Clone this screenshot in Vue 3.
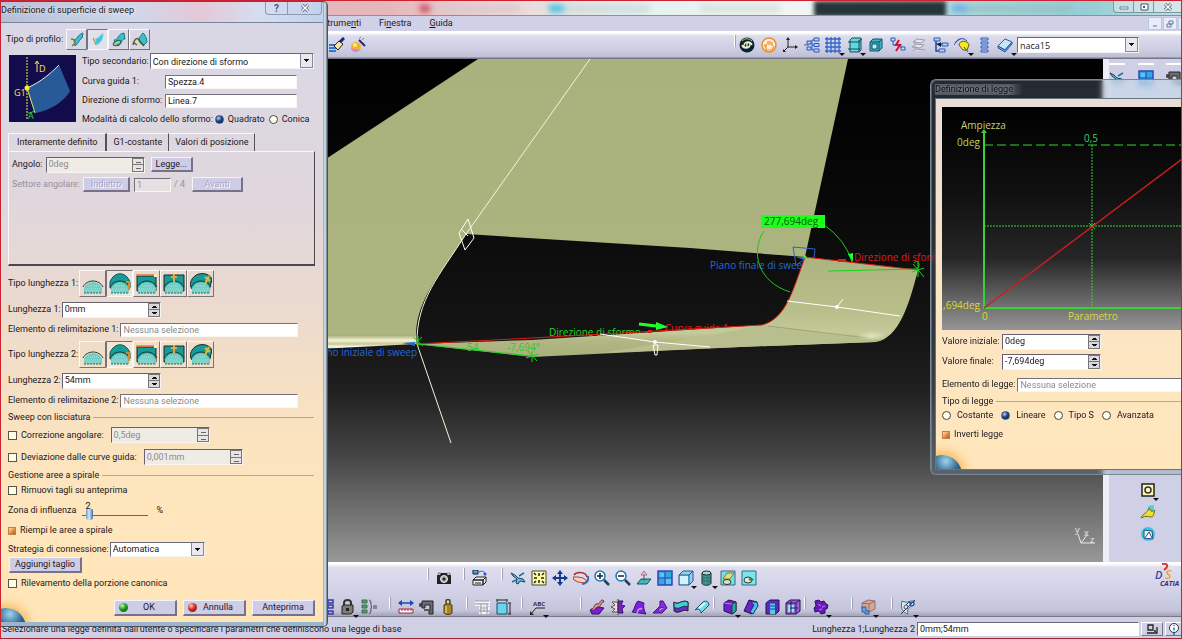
<script setup>
import { ref } from 'vue'

const menus = [
  { pre: 'Strume', key: 'n', post: 'ti' },
  { pre: 'Fi', key: 'n', post: 'estra' },
  { pre: '', key: 'G', post: 'uida' }
]
const topTools = [
  { icon: 'swirl' }, { icon: 'hand' }, { icon: 'axis' }, { icon: 'tree' },
  { icon: 'grid', more: true }, { icon: 'frame', more: true }, { icon: 'cube' },
  { icon: 'link' }, { icon: 'chain' }, { icon: 'branch' }, { icon: 'wheel', more: true },
  { icon: 'stack' }, { icon: 'eraser', more: true }
]
const viewGroups = [
  [{ icon: 'camera' }],
  [{ icon: 'printer' }],
  [{ icon: 'plane' }, { icon: 'fit' }, { icon: 'move' }, { icon: 'rotate' }, { icon: 'zoomin' },
    { icon: 'zoomout' }, { icon: 'normal' }, { icon: 'views' }, { icon: 'iso', more: true },
    { icon: 'shading', more: true }, { icon: 'hide' }, { icon: 'swap' }]
]
const shapeGroups = [
  [{ icon: 'list' }, { icon: 'lock', more: true }, { icon: 'formula' }],
  [{ icon: 'ruler' }, { icon: 'caliper' }, { icon: 'weight' }],
  [{ icon: 'dimgray' }, { icon: 'dimcyan' }],
  [{ icon: 'note', more: true }],
  [{ icon: 'extrude' }, { icon: 'revolve' }, { icon: 'offset' }, { icon: 'sweep' }, { icon: 'loft' }, { icon: 'blend' }],
  [{ icon: 'join', more: true }, { icon: 'split' }, { icon: 'trim' }, { icon: 'extract' }],
  [{ icon: 'gears', more: true }],
  [{ icon: 'pattern', more: true }],
  [{ icon: 'analyse', more: true }]
]
const profiles = ['prof1', 'prof2', 'prof3', 'prof4']
const tabs = ['Interamente definito', 'G1-costante', 'Valori di posizione']
const lengthTypes = ['len1', 'len2', 'len3', 'len4', 'len5']
const lengths = ref([
  { n: 1, value: '0mm', type: 1 },
  { n: 2, value: '54mm', type: 1 }
])
const profile = ref(1)
const tab = ref(0)
const mode = ref('Quadrato')
const law = ref('Lineare')
const laws = ['Costante', 'Lineare', 'Tipo S', 'Avanzata']
const influence = ref(2)
</script>

<template>
  <div class="desktop">
    <svg class="defs" aria-hidden="true">
      <defs>
        <g id="dome"><path d="M2 20v-5c4-8 14-8 18 0v5z" fill="#74cdc4"/><path d="M3 16h16M4 18h14M6 13h10" stroke="#a8e4dc" stroke-dasharray="1 1"/><path d="M2 20h18" stroke="#2d6c68" stroke-dasharray="2 1"/><path d="M1 14c4-8 16-8 20 0" fill="none" stroke="#223838"/></g>
      </defs>
      <symbol id="brush" viewBox="0 0 16 16"><path d="M0 8h8M0 11h9M0 14h7" stroke="#2f78d8" stroke-width="2"/><path d="M5 9l5-5 4 3-5 6z" fill="#f2e9a0" stroke="#222"/><path d="M11 5l4-4" stroke="#1c1c8c" stroke-width="3"/></symbol>
      <symbol id="wand" viewBox="0 0 16 16"><circle cx="6" cy="10" r="5" fill="#f2b52a"/><path d="M1 11a5 5 0 0 0 9 2" fill="#d28bc0"/><circle cx="5" cy="8" r="2" fill="#ffe98a"/><path d="M9 3l6 6" stroke="#26266e" stroke-width="2"/><path d="M9 2l2-2M12 3l2-2" stroke="#d86a3a"/></symbol>
      <symbol id="swirl" viewBox="0 0 16 16"><circle cx="8" cy="8" r="7.500" fill="#0c1f38"/><path d="M8 8c-1-3 4-3 3 0-1 4-7 4-8 0M8 8c1 3-4 3-3 0 1-4 7-4 8 0" fill="none" stroke="#e8f2c8" stroke-width="1.400"/><path d="M3 4c3-3 7-3 10 0" fill="none" stroke="#b9d66a"/></symbol>
      <symbol id="hand" viewBox="0 0 16 16"><circle cx="8" cy="8" r="7" fill="#fbeedd" stroke="#ef8d22" stroke-width="1.500"/><path d="M5 13V7M7 8V4M9 8V4M11 9V5M5 13h6l2-4M5 10L3 8" fill="none" stroke="#ef8d22" stroke-width="1.200"/></symbol>
      <symbol id="axis" viewBox="0 0 16 16"><path d="M6 10V1M6 10h9M6 10l-5 5" stroke="#222" fill="none"/><path d="M4 3l2-3 2 3zM13 8l3 2-3 2zM1 12v3h3z" fill="#222"/></symbol>
      <symbol id="tree" viewBox="0 0 16 16"><path d="M0 8h5M8 3v10M8 3h2M8 8h2M8 13h2" stroke="#2d58b8"/><path d="M3 4h4v3H3zM3 10h4v3H3zM10 1h5v3h-5zM10 6.500h5v3h-5zM10 12h5v3h-5z" fill="#b9d3f5" stroke="#2d58b8"/></symbol>
      <symbol id="grid" viewBox="0 0 16 16"><path d="M2 0v16M6 0v16M10 0v16M14 0v16M0 2h16M0 6h16M0 10h16M0 14h16" stroke="#3464c8" stroke-width="1.300"/></symbol>
      <symbol id="frame" viewBox="0 0 16 16"><path d="M3 3l2-2h9v12l-2 2H3z" fill="#63d8dc" stroke="#174a58"/><path d="M1 5h12M1 12h12M12 3v12M12 4l3-2" stroke="#174a58" fill="none"/></symbol>
      <symbol id="cube" viewBox="0 0 16 16"><path d="M2 5l3-3h9v9l-3 3H2z" fill="#35b9c4" stroke="#15506c"/><path d="M2 5h9v9M11 5l3-3" fill="none" stroke="#15506c"/><path d="M4 7h5v5H4z" fill="#b6f0ee" stroke="#15506c"/></symbol>
      <symbol id="link" viewBox="0 0 16 16"><path d="M1 1h4v3H1zM11 10h4v3h-4z" fill="#cfe0fb" stroke="#2d58b8"/><path d="M3 4v4h8v3" stroke="#2d58b8" fill="none"/><path d="M9 3L6 8h4l-4 6" stroke="#cc1235" stroke-width="2" fill="none"/></symbol>
      <symbol id="chain" viewBox="0 0 16 16"><path d="M2 5l4-3 8 1-4 3zM1 10l4-3 8 1-4 3zM2 14l3-2 9 1" fill="#e4e4ec" stroke="#9c9ca8"/><path d="M4 3v10" stroke="#a8a8b0"/></symbol>
      <symbol id="branch" viewBox="0 0 16 16"><path d="M3 1v13h5M3 7h7" stroke="#1e4a9c" fill="none" stroke-width="1.500"/><path d="M1 1h6v3H1zM9 6h6v3H9zM6 12h6v3H6z" fill="#b9d3f5" stroke="#2d58b8"/><path d="M8 5L4 7.500 8 10z" fill="#123"/></symbol>
      <symbol id="wheel" viewBox="0 0 16 16"><path d="M1 6c4-6 9-5 12-2" stroke="#244a9c" fill="none"/><path d="M0 8c3-4 4-5 7-6" stroke="#244a9c" fill="none" stroke-dasharray="2 1"/><path d="M5 8c0-5 9-5 10 0l-2 5H9z" fill="#f7e71e" stroke="#665a10"/><path d="M10 10l4 5" stroke="#244a9c"/></symbol>
      <symbol id="stack" viewBox="0 0 16 16"><path d="M5 1h7v2H5zM5 5h7v2H5zM5 9h7v2H5zM5 13h7v2H5z" fill="#c6dcfb" stroke="#2858c0"/></symbol>
      <symbol id="eraser" viewBox="0 0 16 16"><path d="M1 9l7-7 7 3-7 8z" fill="#c8e6fa" stroke="#2e58a0"/><path d="M1 9v2l7 4 7-8V5l-7 8z" fill="#6fa8dc" stroke="#2e58a0"/></symbol>
      <symbol id="camera" viewBox="0 0 16 16"><path d="M1 5h3l1-2h6l1 2h3v9H1z" fill="#222"/><path d="M2 3h3v1H2zM11 3h3v2h-3z" fill="#eee" stroke="#333" stroke-width=".5"/><circle cx="8" cy="9" r="3.500" fill="#aaa" stroke="#eee"/><circle cx="8" cy="9" r="1.500" fill="#222"/></symbol>
      <symbol id="printer" viewBox="0 0 16 16"><path d="M1 0h5v4H1z" fill="#3ab5c8" stroke="#214"/><path d="M7 2c4-2 6 0 6 3" stroke="#2355c8" fill="none"/><circle cx="13" cy="4" r="1.500" fill="#2355c8"/><path d="M1 10l3-3h10l-3 3zM1 10h10v5H1zM11 10l3-3v5l-3 3z" fill="#eee" stroke="#222"/><path d="M3 13h6" stroke="#222"/></symbol>
      <symbol id="plane" viewBox="0 0 16 16"><path d="M1 3l4 2 3 3 5 1 2 3-5-1-2 3-2-1 1-4-4-3z" fill="#5cc8d4" stroke="#1b3d68"/><path d="M2 12l4-2M9 6l5-3" stroke="#2b6d98" stroke-width="1.500"/></symbol>
      <symbol id="fit" viewBox="0 0 16 16"><path d="M1 1h14v14H1z" fill="#fffca0" stroke="#444"/><path d="M8 3v3M8 10v3M3 8h3M10 8h3M3 3l2 2M13 3l-2 2M3 13l2-2M13 13l-2-2" stroke="#222" stroke-width="1.500"/></symbol>
      <symbol id="move" viewBox="0 0 16 16"><path d="M8 1v14M1 8h14" stroke="#183a90" stroke-width="2"/><path d="M5 4l3-4 3 4zM5 12l3 4 3-4zM4 5L0 8l4 3zM12 5l4 3-4 3z" fill="#183a90"/></symbol>
      <symbol id="rotate" viewBox="0 0 16 16"><path d="M1 5c3-4 12-3 13 2" fill="none" stroke="#a82626" stroke-width="1.500"/><path d="M0 7h5l5 1 4 3-3 2-6-1-4-2z" fill="#f6d2c0" stroke="#a84632"/><path d="M15 6c1 5-2 8-6 8" fill="none" stroke="#2d69b8" stroke-width="2"/></symbol>
      <symbol id="zoomin" viewBox="0 0 16 16"><circle cx="6" cy="6" r="5" fill="#fff" stroke="#147bb4" stroke-width="1.500"/><path d="M3 6h6M6 3v6" stroke="#222" stroke-width="1.500"/><path d="M10 10l5 5" stroke="#253f5a" stroke-width="2.500"/></symbol>
      <symbol id="zoomout" viewBox="0 0 16 16"><circle cx="6" cy="6" r="5" fill="#fff" stroke="#147bb4" stroke-width="1.500"/><path d="M3 6h6" stroke="#222" stroke-width="1.500"/><path d="M10 10l5 5" stroke="#253f5a" stroke-width="2.500"/></symbol>
      <symbol id="normal" viewBox="0 0 16 16"><path d="M1 14l4-5h10l-4 5z" fill="#46b9b8" stroke="#15506c"/><path d="M8 11V5" stroke="#555"/><path d="M5 5l3-4 3 4z" fill="#e7c5d4" stroke="#84506c" stroke-width=".7"/></symbol>
      <symbol id="views" viewBox="0 0 16 16"><path d="M1 1h14v14H1z" fill="#31a8e0" stroke="#3048b8" stroke-width="1.500"/><path d="M8 1v14M1 8h14" stroke="#3048b8"/><path d="M3 3h4v4H3zM9 9h5v5H9z" fill="#5cc4f0"/></symbol>
      <symbol id="iso" viewBox="0 0 16 16"><path d="M1 5l4-4h10v10l-4 4H1z" fill="#8ed5f4" stroke="#28508c"/><path d="M1 5h10v10M11 5l4-4" fill="none" stroke="#28508c"/><path d="M2 6h8v8H2z" fill="#d2f2ff"/></symbol>
      <symbol id="shading" viewBox="0 0 16 16"><path d="M3 3v10c0 3 9 3 9 0V3" fill="#4da5a5" stroke="#222"/><ellipse cx="7.500" cy="3" rx="4.500" ry="2" fill="#9ae0d0" stroke="#222"/><path d="M5 5v9M8 5v10M10 5v9M3 8h9M3 11h9" stroke="#20605c" stroke-width=".7"/></symbol>
      <symbol id="hide" viewBox="0 0 16 16"><path d="M1 1h14v14H1z" fill="#7bdce6" stroke="#3c6878"/><path d="M3 9l4-6h7l-4 6z" fill="#e5df65" stroke="#555" stroke-width=".7"/><ellipse cx="7" cy="12" rx="4" ry="2.500" fill="#cceac0" stroke="#333"/></symbol>
      <symbol id="swap" viewBox="0 0 16 16"><path d="M1 1h14v14H1z" fill="#7be6f0" stroke="#2c6a88"/><ellipse cx="7" cy="10" rx="4" ry="3" fill="#e6ecd0" stroke="#333"/><path d="M8 9c2 1 3 1 4 0" stroke="#347a44" stroke-width="2" fill="none"/></symbol>
      <symbol id="list" viewBox="0 0 16 16"><path d="M9 1h5v3H9zM9 6h5v3H9zM9 12h5v3H9zM2 2v11" fill="none" stroke="#3838a8" stroke-width="1.500"/></symbol>
      <symbol id="lock" viewBox="0 0 16 16"><path d="M4 7V4c0-4 7-4 7 0v3" fill="none" stroke="#333" stroke-width="2"/><path d="M2 7l2-1h9v7l-2 2H2z" fill="#807c70" stroke="#222"/><path d="M6 9h3v3H6z" fill="#222"/></symbol>
      <symbol id="formula" viewBox="0 0 16 16"><path d="M1 1h5v3H1zM1 6h5v3H1zM1 11h5v3H1z" fill="#38a09a" stroke="#4b6c38"/><path d="M8 1c3 0 1 6 3 7-2 0 0 6-3 7M12 7h4M12 9h4" fill="none" stroke="#444"/></symbol>
      <symbol id="ruler" viewBox="0 0 16 16"><path d="M1 4h14" stroke="#2345b8" stroke-width="1.500"/><path d="M4 1L0 4l4 3zM12 1l4 3-4 3z" fill="#2345b8"/><path d="M1 10h14v4H1z" fill="#fff" stroke="#9c2632"/><path d="M4 10v2M7 10v2M10 10v2M13 10v2" stroke="#9c2632"/></symbol>
      <symbol id="caliper" viewBox="0 0 16 16"><path d="M3 2h11v13h-4v-3h1V6H6v3H3z" fill="#686c74" stroke="#222"/><path d="M3 5H1v2h2M5 11h5" stroke="#333" stroke-width="1.500" fill="none"/></symbol>
      <symbol id="weight" viewBox="0 0 16 16"><path d="M6 5V2c0-2 4-2 4 0v3" stroke="#554414" stroke-width="1.500" fill="none"/><path d="M4 6l2-1h4l2 1v8c-2 2-6 2-8 0z" fill="#a88423" stroke="#4c3c12"/><path d="M6 7v7" stroke="#e0c878" stroke-width="1.500"/></symbol>
      <symbol id="dimgray" viewBox="0 0 16 16"><path d="M0 3h14v3H0zM4 9h10v2M7 14V6M11 14V6M4 14h10" fill="none" stroke="#f6f6fa" stroke-width="2"/><path d="M0 2h14M0 5h14M5 9h8M5 12h8M6 5v10M12 5v10" stroke="#9c9ca8"/></symbol>
      <symbol id="dimcyan" viewBox="0 0 16 16"><path d="M1 4h10v11H1z" fill="#68d5ea" stroke="#174a78"/><path d="M1 1h10M14 4v11M12 4h3M12 15h3M1 0v3M11 0v3" stroke="#222"/></symbol>
      <symbol id="note" viewBox="0 0 16 16"><path d="M1 15l5-6h9" stroke="#222" fill="none"/><path d="M0 12v4h4z" fill="#222"/><text x="3" y="7" font-family="Open Sans, sans-serif" font-size="6" font-weight="700" fill="#333">ABC</text></symbol>
      <symbol id="extrude" viewBox="0 0 16 16"><path d="M1 11l9-3 5 1-5 6H3z" fill="#7a20cf" stroke="#38106c"/><path d="M2 10c4 0 2-5 6-5s2-4 6-4l1 2c-3 0-2 4-6 5s-3 4-6 3z" fill="#d49a78" stroke="#6c2c6c"/></symbol>
      <symbol id="revolve" viewBox="0 0 16 16"><path d="M7 3H2l3 3-4 2 4 2-3 3h5" fill="#e9e1d0" stroke="#555"/><path d="M8 2h5l-2 4 4 1-3 3 1 4H8z" fill="#7a20cf" stroke="#38106c"/><path d="M8 0v16" stroke="#333" stroke-dasharray="2 1"/></symbol>
      <symbol id="offset" viewBox="0 0 16 16"><path d="M1 13c3-3 3-9 6-11l6 2c-1 3 0 8 2 11z" fill="#7d22dc" stroke="#42127c"/><path d="M6 14c1-4 3-5 5-4" stroke="#c898f0" stroke-width="1.500" fill="none"/></symbol>
      <symbol id="sweep" viewBox="0 0 16 16"><path d="M1 14l7-7V2h3l4 7-5 5z" fill="#8a2be2" stroke="#42127c"/><path d="M6 12c1-3 4-4 6-3" fill="#d8c8ec" stroke="#42127c"/></symbol>
      <symbol id="loft" viewBox="0 0 16 16"><path d="M1 3c4 4 8-3 14 0v9c-5-3-9 4-14 0z" fill="#6b2ac8" stroke="#222"/><path d="M1 3c4 4 8-3 14 0v5c-5-3-9 4-14 0z" fill="#48cbd8" stroke="#234"/></symbol>
      <symbol id="blend" viewBox="0 0 16 16"><path d="M1 11l8-8c3-2 6 0 6 3l-8 8c0-3-3-5-6-3z" fill="#73deee" stroke="#234c6c"/><path d="M5 9l6-5" stroke="#d8fbff" stroke-width="2"/></symbol>
      <symbol id="join" viewBox="0 0 16 16"><path d="M2 4l5-3 7 2v9l-4 3-8-3z" fill="#6b22c8" stroke="#221048"/><path d="M10 5l4-2v9l-4 3z" fill="#2da6b0" stroke="#143"/><path d="M2 4l8 1" stroke="#b882e8"/></symbol>
      <symbol id="split" viewBox="0 0 16 16"><path d="M1 12L6 1l8 2-5 12z" fill="#6b22c8" stroke="#221048"/><path d="M8 3l6 0 1 4-5 8-3-2 4-7z" fill="#52bdf0" stroke="#123a6c"/></symbol>
      <symbol id="trim" viewBox="0 0 16 16"><path d="M2 4l4-3h9v11l-3 3H2z" fill="#6b22c8" stroke="#221048"/><path d="M6 4h5v11H6z" fill="#52cbe8"/><path d="M6 7h5M6 10h5M2 4h10v11" fill="none" stroke="#2440a0"/></symbol>
      <symbol id="extract" viewBox="0 0 16 16"><path d="M1 4l4-3h10v11l-4 3H1z" fill="#9864d4" stroke="#221048"/><path d="M3 6h6v7H3z" fill="#8be8ea"/><path d="M1 4h10v11M11 4l4-3M5 9h8M6 2v12" fill="none" stroke="#2a1860"/></symbol>
      <symbol id="gears" viewBox="0 0 16 16"><path d="M2 2l4-1 2 2 3-1 2 3 2 1-1 4-2 0 0 4-4 1-2-3-4 1-1-4 2-2z" fill="#6718b8" stroke="#301060"/><path d="M5 5l3 2M9 8l3-1M6 11l3-1" stroke="#a860e0" stroke-width="1.500"/></symbol>
      <symbol id="pattern" viewBox="0 0 16 16"><path d="M2 4l6-3 7 1v8l-6 3-7-3z" fill="#d8a890" stroke="#996c70"/><path d="M9 5v8M2 4l7 1 6-3" stroke="#8a6878" fill="none"/><path d="M2 8h4v4h3v3H5v-2H2z" fill="#60a8e4" stroke="#2b5aa8"/></symbol>
      <symbol id="analyse" viewBox="0 0 16 16"><path d="M2 2c6 3 8-1 12 0v4c-4 1-8 5-6 9-5-1-8-6-6-13z" fill="#c4eef4" stroke="#1d7fa8"/><path d="M1 15L15 1M6 6l3-3 3 2" stroke="#333" fill="none"/><circle cx="6" cy="8" r="2" fill="none" stroke="#c22a50"/><circle cx="12" cy="5" r="2" fill="none" stroke="#2430a8"/></symbol>
      <symbol id="sketch" viewBox="0 0 16 16"><path d="M2 2h12v12H2z" fill="#fff6b4" stroke="#222" stroke-width="1.500"/><circle cx="8" cy="8" r="3" fill="none" stroke="#333" stroke-width="1.500"/></symbol>
      <symbol id="surface" viewBox="0 0 16 16"><path d="M8 2l6-1v8l-5 2z" fill="#5acbd8"/><path d="M1 14c2-5 6-4 8-10l2 3c2 1 4-1 4-1-2 5-1 7-4 7s-4-2-10 1z" fill="#e9e22c" stroke="#6c6a1a"/></symbol>
      <symbol id="spot" viewBox="0 0 16 16"><circle cx="8" cy="8" r="7" fill="#35c8e0"/><path d="M4 4l8 1 1 8-9-1z" fill="#e8f2d0" stroke="#214a8c"/><path d="M5 12l4-6 3 6" fill="#fff" stroke="#214a8c"/></symbol>
      <symbol id="prof1" viewBox="0 0 16 16"><path d="M5 8c3 0 3-5 9-7l-1 5c-3 2-3 5-7 8z" fill="#3abfce" stroke="#19788a"/><path d="M2 7c2 0 4 1 4 3s-2 3-3 4" fill="none" stroke="#7d7a30" stroke-width="1.500"/></symbol>
      <symbol id="prof2" viewBox="0 0 16 16"><path d="M5 7c4-1 5-4 8-6 1 6-3 11-7 12z" fill="#45c3dc" stroke="#92dcec"/><path d="M3 6l3 7" stroke="#a88c28"/></symbol>
      <symbol id="prof3" viewBox="0 0 16 16"><path d="M3 8c5 0 3-6 10-7l1 6c-5 0-2 6-8 7z" fill="#3abfce" stroke="#19788a"/><ellipse cx="6" cy="11" rx="4" ry="2" fill="#8fd0cc" stroke="#3e5b30" transform="rotate(-25 6 11)"/></symbol>
      <symbol id="prof4" viewBox="0 0 16 16"><path d="M7 6l4-5c3 2 4 8 4 9l-3 3-4-4z" fill="#3abfce" stroke="#19788a"/><path d="M1 13c2-8 5-8 7-3l4 4M1 10l4 3" fill="none" stroke="#59601c" stroke-width="1.500"/></symbol>
      <symbol id="len1" viewBox="0 0 22 22"><use href="#dome"/></symbol>
      <symbol id="len2" viewBox="0 0 22 22"><path d="M1 15V9c4-11 16-11 20 0v6z" fill="#159c98" stroke="#155"/><use href="#dome"/><path d="M20 8v9M17 9h4" stroke="#d88b24" stroke-width="2"/></symbol>
      <symbol id="len3" viewBox="0 0 22 22"><path d="M1 3h19v15H1z" fill="#159c98" stroke="#222"/><use href="#dome"/><path d="M0 2h19" stroke="#e87a3a" stroke-width="1.500"/><path d="M18 1h3v3h-3z" fill="#fff0b0"/></symbol>
      <symbol id="len4" viewBox="0 0 22 22"><path d="M1 2h20v16H1z" fill="#159c98" stroke="#222"/><use href="#dome"/><path d="M11 1v8M8 4h6" stroke="#e8a83a" stroke-width="2"/></symbol>
      <symbol id="len5" viewBox="0 0 22 22"><path d="M0 12c2-14 18-14 22-6l-3 12-17-2z" fill="#159c98" stroke="#222"/><use href="#dome"/><path d="M19 3l-4 8M15 4l5 4" stroke="#e8b83a" stroke-width="2"/></symbol>
    </svg>

    <main class="app">
      <header class="titlebar">
        <i class="ghost g1"></i><i class="ghost g2"></i><i class="ghost g3"></i><i class="ghost g4"></i><i class="ghost g5"></i>
        <div class="winbtns">
          <button aria-label="Riduci"><svg viewBox="0 0 10 8"><path d="M1 4h8v2H1z" fill="#fff" stroke="#456" stroke-width=".7"/></svg></button>
          <button aria-label="Ripristina"><svg viewBox="0 0 10 8"><path d="M2 1h7v6H2z" fill="#fff" stroke="#456"/><path d="M4 3h2v2H4z" fill="#456"/></svg></button>
          <button aria-label="Chiudi" class="last"><svg viewBox="0 0 10 8"><path d="M2 1l6 6M8 1L2 7" stroke="#456" stroke-width="3"/><path d="M2 1l6 6M8 1L2 7" stroke="#fff" stroke-width="1.500"/></svg></button>
        </div>
      </header>

      <nav class="menubar">
        <a v-for="m in menus" :key="m.post" href="#">{{ m.pre }}<u>{{ m.key }}</u>{{ m.post }}</a>
        <span class="docbtns">
          <button aria-label="Riduci documento"><svg viewBox="0 0 10 10"><path d="M3 7h4" stroke="#68789a"/></svg></button>
          <button aria-label="Ripristina documento"><svg viewBox="0 0 10 10"><path d="M4 2h4v3H4zM2 5h4v3H2z" fill="none" stroke="#68789a"/></svg></button>
          <button aria-label="Chiudi documento"></button>
        </span>
      </nav>

      <div class="toolbar top">
        <button class="tool" aria-label="Proprietà"><svg><use href="#brush"/></svg></button>
        <button class="tool" aria-label="Effetto"><svg><use href="#wand"/></svg></button>
        <div class="toptools">
          <span class="sep"></span>
          <button v-for="t in topTools" :key="t.icon" class="tool" :class="{ more: t.more }" :aria-label="t.icon"><svg><use :href="'#' + t.icon"/></svg></button>
        </div>
        <span class="combo body-combo"><select aria-label="Corpo attivo"><option>naca15</option></select></span>
      </div>

      <div class="work">
        <svg class="scene" viewBox="0 59 1103 503" preserveAspectRatio="xMinYMin slice">
          <defs>
            <linearGradient id="sky" gradientUnits="userSpaceOnUse" x1="0" y1="59" x2="0" y2="562">
              <stop offset="0" stop-color="#000"/><stop offset=".25" stop-color="#070707"/><stop offset=".55" stop-color="#141414"/>
              <stop offset=".66" stop-color="#202020"/><stop offset=".78" stop-color="#424242"/><stop offset="1" stop-color="#989898"/>
            </linearGradient>
            <linearGradient id="wing" x1="0" y1="0" x2="0" y2="1"><stop offset="0" stop-color="#a9b27c"/><stop offset="1" stop-color="#acb47f"/></linearGradient>
            <linearGradient id="edge" x1="0" y1="0" x2="0" y2="1">
              <stop offset="0" stop-color="#a3a878"/><stop offset=".35" stop-color="#f4f2cc"/><stop offset=".6" stop-color="#c9c89a"/><stop offset=".8" stop-color="#fffef0"/><stop offset="1" stop-color="#77785a"/>
            </linearGradient>
            <linearGradient id="tip" x1="0" y1="0" x2="0" y2="1">
              <stop offset="0" stop-color="#acb37e"/><stop offset=".55" stop-color="#b9bf8b"/><stop offset=".76" stop-color="#c6c99a"/><stop offset=".84" stop-color="#b0b684"/><stop offset="1" stop-color="#a8ae7c"/>
            </linearGradient>
            <radialGradient id="glow"><stop offset="0" stop-color="#e4e6bc"/><stop offset="1" stop-color="#e4e6bc" stop-opacity="0"/></radialGradient>
          </defs>
          <rect y="59" width="2400" height="1400" fill="url(#sky)"/>
          <g class="label">
            <text x="549" y="336" fill="#22d422">Direzione di sformo</text>
            <text x="665" y="332" fill="#f01818">Curva guida 1</text>
            <text x="710" y="269" fill="#2767d8">Piano finale di sweep</text>
            <text x="854" y="261" fill="#e01a1a">Direzione di sformo</text>
            <text x="417" y="356" fill="#2767d8" text-anchor="end">Piano iniziale di sweep</text>
          </g>
          <path d="M300 176L478 59H848L805 257L690 248L466 234C440 275 416 300 416 336H300z" fill="url(#wing)"/>
          <path d="M300 335H416V344L300 350z" fill="url(#edge)"/>
          <path d="M416 344L532 340L762 325C786 319 793 290 805 257L918 270C909 305 899 338 876 342L740 347L532 357z" fill="url(#tip)"/>
          <path d="M762 325C800 329 840 334 876 342L740 347L600 353C660 344 720 334 762 325z" fill="#b9be8e"/>
          <path d="M768 326L868 338" stroke="#8f9568" stroke-opacity=".6"/>
          <ellipse cx="872" cy="336" rx="16" ry="5" fill="url(#glow)"/>
          <g fill="none">
            <path d="M416 344L532 338L762 325C786 319 793 290 805 257L918 270" stroke="#d82010"/>
            <path d="M590 59L466 234C440 275 416 300 417 344L451 443" stroke="#f4f4dc"/>
            <path d="M468 219l6 19-9 12-6-17zM462 230l6 6" stroke="#fff"/>
            <path d="M787 301L837 307L900 316M837 307l6-8M600 334L655 342L710 347" stroke="#fff"/>
            <path d="M653 345h5l-1 10h-2z" stroke="#fff"/>
            <path d="M793 247l22 2-1 9M793 247l3 18 9-6" stroke="#2d62c8"/>
            <path d="M764 231C750 252 758 282 790 292M824 225Q845 239 852 262" stroke="#1fc81f"/>
            <path d="M828 271L918 269M417 344L532 356" stroke="#1fd01f"/>
            <path d="M413 337l10 9M413 345l9-8M418 336v11M527 350l10 11M526 358l12-4M532 351v11M913 264l11 13M912 272l12-4M918 261v16M914 263c3-4 7 1 4 5" stroke="#1fd01f"/>
            <path d="M639 324L656 326" stroke="#1fff2f" stroke-width="3"/>
          </g>
          <path d="M656 322l12 5-12 3z" fill="#1fff2f"/>
          <path d="M848 254l5 8 0-9z" fill="#1fff2f"/>
          <path d="M402 343l13-1v4zM796 257h8v3z" fill="#2767d8"/>
          <path d="M838 259h8v3h-8zM648 330h4v3h-4z" fill="#e01a1a"/>
          <circle cx="837" cy="307" r="2" fill="#fff"/><circle cx="655" cy="342" r="2" fill="#fff"/><circle cx="805" cy="257" r="1.500" fill="#1fff2f"/>
          <g class="label">
            <rect x="761" y="215" width="64" height="13" fill="#1cff1c"/>
            <text x="764" y="225" fill="#075807">277,694deg</text>
            <text x="467" y="351" fill="#2fc62f">54</text>
            <text x="507" y="351" fill="#2fc62f">-7,694°</text>
          </g>
          <g class="triad" fill="#e8e8e8">
            <path d="M1078 534l3 9h14M1081 543l6-8" fill="none" stroke="#e8e8e8"/>
            <text x="1075" y="533">y</text><text x="1084" y="536">x</text><text x="1090" y="543">z</text>
          </g>
        </svg>
        <aside class="sidebar">
          <div class="side-top">
            <span><svg><use href="#plane"/></svg></span><span><svg><use href="#views"/></svg></span><span><svg><use href="#caliper"/></svg></span>
          </div>
          <div class="side-low">
            <button class="tool more" aria-label="Schizzo"><svg><use href="#sketch"/></svg></button>
            <button class="tool" aria-label="Superficie"><svg><use href="#surface"/></svg></button>
            <button class="tool" aria-label="Punto"><svg><use href="#spot"/></svg></button>
          </div>
        </aside>
      </div>

      <footer class="bottom">
        <div class="toolrow views-row">
          <div v-for="(g, i) in viewGroups" :key="i" class="group">
            <span class="sep"></span>
            <button v-for="t in g" :key="t.icon" class="tool" :class="{ more: t.more }" :aria-label="t.icon"><svg><use :href="'#' + t.icon"/></svg></button>
          </div>
        </div>
        <div class="toolrow shapes-row">
          <div v-for="(g, i) in shapeGroups" :key="i" class="group">
            <span class="sep"></span>
            <button v-for="t in g" :key="t.icon" class="tool" :class="{ more: t.more }" :aria-label="t.icon"><svg><use :href="'#' + t.icon"/></svg></button>
          </div>
        </div>
        <svg class="brand" viewBox="0 0 28 26">
          <path d="M8 1c6-1 7 2 2 6" fill="none" stroke="#d23a3a" stroke-width="2"/>
          <g font-family="Open Sans, sans-serif" font-style="italic" font-weight="600">
            <text x="1" y="16" font-size="11" fill="#3b3fa0">D</text><text x="11" y="16" font-size="13" fill="#eda334">S</text>
            <text x="6" y="23" font-size="7" font-weight="700" fill="#3c2c84">CATIA</text>
          </g>
        </svg>
      </footer>

      <div class="status">
        <span>Selezionare una legge definita dall'utente o specificare i parametri che definiscono una legge di base</span>
        <label for="power">Lunghezza 1;Lunghezza 2</label>
        <input id="power" value="0mm;54mm">
        <button aria-label="Riduci input"><svg viewBox="0 0 12 12"><path d="M2 2h5v5H2zM1 10h10V4M8 8h2" fill="none" stroke="#222" stroke-width="1.300"/></svg></button>
        <button aria-label="Informazioni"><svg viewBox="0 0 12 12"><circle cx="6" cy="5" r="4.500" fill="#fff" stroke="#333"/><path d="M6 4.500v3M6 2v1M6 10v2" stroke="#1679b4" stroke-width="1.500"/></svg></button>
      </div>
    </main>

    <section class="dialog sweep-dialog">
      <header>
        <h1>Definizione di superficie di sweep</h1>
        <div class="dlgbtns">
          <button aria-label="Aiuto">?</button>
          <button aria-label="Chiudi"><svg viewBox="0 0 10 8"><path d="M2 1l6 6M8 1L2 7" stroke="#556" stroke-width="3"/><path d="M2 1l6 6M8 1L2 7" stroke="#fff" stroke-width="1.500"/></svg></button>
        </div>
      </header>
      <div class="panel">
        <div class="row profile">
          <span>Tipo di profilo:</span>
          <div class="icons small">
            <button v-for="(p, i) in profiles" :key="p" :aria-pressed="profile === i" :aria-label="'Profilo ' + (i + 1)" @click="profile = i"><svg><use :href="'#' + p"/></svg></button>
          </div>
        </div>

        <div class="setup">
          <svg class="preview" viewBox="0 0 67 67">
            <rect width="67" height="67" fill="#120c4c"/>
            <path d="M18 33C32 27 42 18 50 10L61 36C55 47 40 56 26 58z" fill="#285a98"/>
            <path d="M18 33C32 27 42 18 50 10" fill="none" stroke="#e8e8f4"/>
            <path d="M18 2v62" stroke="#ecec50" stroke-dasharray="2 1"/>
            <path d="M18 33l8 25M28 17V6M26 9l2-3 2 3" fill="none" stroke="#ecec50"/>
            <circle cx="18" cy="33" r="2.500" fill="#ffee20"/>
            <path d="M19 58c3 0 5-1 7-3" stroke="#30d830" fill="none"/>
            <g font-size="9" font-family="Open Sans, sans-serif"><text x="30" y="17" fill="#ecec50">D</text><text x="5" y="41" fill="#ecec50">G1</text><text x="19" y="64" fill="#30d830">A</text></g>
          </svg>
          <div class="fields">
            <div class="row"><label for="sub">Tipo secondario:</label><span class="combo grow"><select id="sub"><option>Con direzione di sformo</option></select></span></div>
            <div class="row aligned"><label for="guide">Curva guida 1:</label><input id="guide" value="Spezza.4"></div>
            <div class="row aligned"><label for="draft">Direzione di sformo:</label><input id="draft" value="Linea.7"></div>
            <div class="row modes"><span>Modalità di calcolo dello sformo:</span>
              <label v-for="m in ['Quadrato', 'Conica']" :key="m"><input v-model="mode" type="radio" name="mode" :value="m">{{ m }}</label>
            </div>
          </div>
        </div>

        <div class="tabs" role="tablist">
          <button v-for="(t, i) in tabs" :key="t" role="tab" :aria-selected="tab === i" @click="tab = i">{{ t }}</button>
        </div>
        <div class="tabpage">
          <div class="row"><label for="angle">Angolo:</label><span class="spin off"><input id="angle" value="0deg" disabled><span><button aria-label="Su" disabled></button><button aria-label="Giù" disabled></button></span></span><button class="btn law-btn">Legge...</button></div>
          <div class="row faded"><label for="sector">Settore angolare:</label><button class="btn" disabled>Indietro</button><input id="sector" class="sector" value="1" disabled><span class="total">/ 4</span><button class="btn" disabled>Avanti</button></div>
        </div>

        <template v-for="l in lengths" :key="l.n">
          <div class="row types"><span>Tipo lunghezza {{ l.n }}:</span>
            <div class="icons big">
              <button v-for="(t, i) in lengthTypes" :key="t" :aria-pressed="l.type === i" :aria-label="'Tipo ' + (i + 1)" @click="l.type = i"><svg><use :href="'#' + t"/></svg></button>
            </div>
          </div>
          <div class="row spinrow"><label :for="'len' + l.n + 'v'">Lunghezza {{ l.n }}:</label><span class="spin"><input :id="'len' + l.n + 'v'" v-model="l.value"><span><button aria-label="Su"></button><button aria-label="Giù"></button></span></span></div>
          <div class="row limit"><label :for="'lim' + l.n">Elemento di relimitazione {{ l.n }}:</label><input :id="'lim' + l.n" placeholder="Nessuna selezione"></div>
        </template>

        <div class="legend">Sweep con lisciatura</div>
        <div class="row smooth"><label><input type="checkbox">Correzione angolare:</label><span class="spin off"><input aria-label="Correzione angolare" value="0,5deg" disabled><span><button aria-label="Su" disabled></button><button aria-label="Giù" disabled></button></span></span></div>
        <div class="row smooth"><label><input type="checkbox">Deviazione dalle curve guida:</label><span class="spin off"><input aria-label="Deviazione" value="0,001mm" disabled><span><button aria-label="Su" disabled></button><button aria-label="Giù" disabled></button></span></span></div>
        <div class="legend">Gestione aree a spirale</div>
        <div class="row check"><label><input type="checkbox">Rimuovi tagli su anteprima</label></div>
        <div class="row zone"><label for="zone">Zona di influenza</label><span class="slider"><output for="zone">{{ influence }}</output><input id="zone" v-model="influence" type="range" min="0" max="30"></span><span>%</span></div>
        <div class="row check"><label><input type="checkbox" checked>Riempi le aree a spirale</label></div>
        <div class="connect">
          <div class="row"><label for="strategy">Strategia di connessione:</label><span class="combo strategy"><select id="strategy"><option>Automatica</option></select></span></div>
          <button class="btn add">Aggiungi taglio</button>
        </div>
        <div class="row check"><label><input type="checkbox">Rilevamento della porzione canonica</label></div>
        <div class="actions">
          <button class="btn"><i class="dot ok"></i>OK</button><button class="btn"><i class="dot no"></i>Annulla</button><button class="btn">Anteprima</button>
        </div>
        <i class="globe"></i>
      </div>
    </section>

    <section class="dialog law-dialog">
      <header><h2>Definizione di legge</h2></header>
      <div class="panel">
        <svg class="chart" viewBox="0 0 240 223" preserveAspectRatio="xMinYMin slice">
          <defs><linearGradient id="cg" x1="0" y1="0" x2="0" y2="1"><stop offset="0" stop-color="#000"/><stop offset=".4" stop-color="#111"/><stop offset=".68" stop-color="#262626"/><stop offset=".8" stop-color="#505050"/><stop offset="1" stop-color="#969696"/></linearGradient></defs>
          <rect width="2000" height="223" fill="url(#cg)"/>
          <g fill="none" stroke="#38d238">
            <path d="M42 24V201H2000" stroke-width="2"/><path d="M42 38H2000" stroke-dasharray="9 4"/><path d="M42 119H2000M150 38V201" stroke-dasharray="2 1"/>
            <path d="M147 116l6 6M153 116l-6 6"/>
          </g>
          <path d="M39 26l3-4 3 4z" fill="#38d238"/>
          <path d="M42 201L240 52" stroke="#d01c1c" stroke-width="1.500"/>
          <g class="label" fill="#d8d838"><text x="19" y="22" fill="#c8d070">Ampiezza</text><text x="38" y="39" fill="#b8d858" text-anchor="end">0deg</text><text x="38" y="202" text-anchor="end">,694deg</text><text x="40" y="213">0</text><text x="126" y="213">Parametro</text><text x="142" y="35" fill="#38d268">0,5</text></g>
        </svg>
        <div class="row lawval"><label for="v0">Valore iniziale:</label><span class="spin"><input id="v0" value="0deg"><span><button aria-label="Su"></button><button aria-label="Giù"></button></span></span></div>
        <div class="row lawval"><label for="v1">Valore finale:</label><span class="spin"><input id="v1" value="-7,694deg"><span><button aria-label="Su"></button><button aria-label="Giù"></button></span></span></div>
        <div class="row limit"><label for="le">Elemento di legge:</label><input id="le" placeholder="Nessuna selezione"></div>
        <div class="legend">Tipo di legge</div>
        <div class="row laws"><label v-for="l in laws" :key="l"><input v-model="law" type="radio" name="law" :value="l">{{ l }}</label></div>
        <div class="row check"><label><input type="checkbox" checked>Inverti legge</label></div>
        <i class="globe"></i>
      </div>
    </section>
    <i class="outline"></i>
  </div>
</template>

<style>
body { margin: 0; }
</style>

<style scoped>
* { box-sizing: border-box; }
.desktop { position: relative; min-height: 100vh; overflow: hidden; display: flex; font: 9px/11px Roboto, "Open Sans", sans-serif; color: #1c1822; background: #d2d2e6; }
.defs { position: absolute; width: 0; height: 0; }
button, input, select { font: inherit; color: inherit; margin: 0; padding: 0; border: 0; border-radius: 0; background: none; min-width: 0; }
.app { flex: 1; display: flex; flex-direction: column; min-width: 0; }
.outline { position: absolute; inset: 0 0 1px 0; border: 1px solid #cb2331; border-bottom-color: #9c2434; pointer-events: none; }

.titlebar { position: relative; height: 16px; overflow: hidden; background: linear-gradient(90deg, #e2b0b6 0, #e6b8bc 33%, #ecd6d8 42%, #e4f2f0 54%, #f2f6f4 68%, #b4dce0 80%, #96cdd4 92%, #c3dce2 100%); border-bottom: 1px solid #8b90a0; }
.ghost { position: absolute; top: 5px; height: 7px; filter: blur(3px); background: #b9a3aa; }
.g1 { left: 420px; width: 100px; background: linear-gradient(90deg, #c8384a 0 7px, #dcc8cc 12px); }
.g2 { left: 549px; width: 100px; background: linear-gradient(90deg, #2cc0e4 0 13px, #ccdbde 16px); }
.g3 { left: 700px; width: 80px; background: #d6e2de; }
.g4 { left: 814px; width: 132px; top: 1px; height: 16px; background: #26353a; filter: blur(2px); }
.g5 { left: 952px; width: 120px; background: linear-gradient(90deg, #65a8e0 0 13px, #94c2c8 16px); }
.winbtns { position: absolute; right: 0; top: 0; display: flex; height: 13px; border: 1px solid #7a98a2; border-right: 0; border-radius: 0 0 0 4px; background: #ffffff55; }
.winbtns button { width: 20px; border-right: 1px solid #7a98a2; display: grid; place-items: center; }
.winbtns .last { width: 28px; border: 0; }
.winbtns svg { width: 10px; height: 8px; }

.menubar { height: 15px; display: flex; align-items: center; gap: 18px; padding-left: 322px; background: #d0d1e7; }
.menubar a { color: inherit; text-decoration: none; }
.docbtns { margin-left: auto; display: flex; gap: 1px; }
.docbtns button { width: 14px; height: 13px; border: 1px solid #bcc6de; background: #e6edf8; display: grid; place-items: center; }
.docbtns button:last-child { width: 4px; border-color: #bcc6de; }
.docbtns svg { width: 10px; height: 10px; }

.toolbar.top { height: 28px; display: flex; align-items: center; padding: 0 43px 0 326px; background: linear-gradient(#fff 0 2px, #dcdcec 5px, #cfd0e6 60%, #bfc0d4 92%, #77788a 97%); }
.toptools { margin-left: auto; display: flex; align-items: center; justify-content: space-between; width: 282px; }
.sep { width: 2px; height: 12px; border-left: 1px solid #fff; border-right: 1px solid #a2a2b4; align-self: flex-start; }
.tool { position: relative; width: 21px; height: 20px; display: grid; place-items: center; flex: none; }
.tool svg { width: 16px; height: 16px; }
.tool.more::after { content: ""; position: absolute; right: -1px; bottom: -1px; border: 3px solid transparent; border-top: 3px solid #111; border-bottom: 0; }
.combo { position: relative; display: flex; border: 1px solid; border-color: #686878 #f4f4f4 #f4f4f4 #686878; background: #fff; height: 16px; }
.combo select { appearance: none; flex: 1; padding: 0 14px 0 2px; }
.combo::after { content: ""; position: absolute; right: 0; top: 0; bottom: 0; width: 11px; background: linear-gradient(#111, #111) 3px 5px/5px 1px no-repeat, linear-gradient(#111, #111) 4px 6px/3px 1px no-repeat, linear-gradient(#111, #111) 5px 7px/1px 1px no-repeat, #e8e8ee; border: 1px solid #88889a; border-width: 0 1px 1px 1px; pointer-events: none; }
.body-combo { width: 122px; margin-left: 1px; font-family: "Open Sans", sans-serif; }

.work { flex: 1; display: flex; min-height: 0; }
.scene { flex: 1; min-width: 0; height: 100%; display: block; }
.label { font: 10px "Open Sans", sans-serif; }
.triad { font: 9px "Open Sans", sans-serif; }
.sidebar { width: 79px; flex: none; border-left: 6px solid #eeeef8; background: #cfd0e6; display: flex; flex-direction: column; justify-content: space-between; align-items: center; }
.side-top { align-self: stretch; display: flex; justify-content: space-between; padding: 4px 0 0; }
.side-top span { border-top: 2px solid #fff; padding-top: 5px; }
.side-top svg { width: 16px; height: 16px; display: block; }
.side-low { display: flex; flex-direction: column; gap: 2px; padding: 0 0 18px 4px; }

.bottom { position: relative; height: 55px; border-bottom: 1px solid #777888; padding-top: 6px; background: linear-gradient(#fff 0 2px, #dedeee 5px, #cfd0e6 60%, #c4c5da 90%, #a4a4b8); }
.toolrow { display: grid; height: 29px; }
.views-row { grid-template-columns: 36px 38px auto; padding-left: 427px; }
.shapes-row { grid-template-columns: 79px 77px 55px 59px 133px 91px 47px 40px auto; padding-left: 310px; height: 20px; }
.group { display: flex; align-items: flex-start; }
.group .sep { margin-right: 4px; flex: none; }
.brand { position: absolute; right: 0; top: 1px; width: 28px; height: 26px; }

.status { height: 23px; display: flex; align-items: center; gap: 2px; padding: 1px 0 0 2px; background: #cfd0e6; }
.status label { margin-left: auto; }
.status input { width: 222px; height: 14px; padding: 0 2px; background: #fff; border: 1px solid; border-color: #686878 #fff #fff #686878; }
.status button { width: 22px; height: 14px; border: 1px solid; border-color: #fff #77778a #77778a #fff; display: grid; place-items: center; }
.status button:last-child { width: 17px; }
.status svg { width: 12px; height: 12px; }

.dialog { position: absolute; border: 1px solid #49535f; }
h1, h2 { margin: 0; font: inherit; font-size: 9px; }
.panel { position: relative; overflow: hidden; }
.row { display: flex; align-items: center; gap: 3px; white-space: nowrap; }
.row > input { height: 14px; padding: 0 2px; background: #fff; border: 1px solid; border-color: #76707a #faf6f2 #faf6f2 #76707a; }
input::placeholder { color: #8a8a8a; opacity: 1; }

.sweep-dialog { left: 0; top: 1px; width: 328px; padding: 0 4px 4px 0; border-left: 0; border-radius: 0 5px 5px 0; background: linear-gradient(90deg, transparent 322px, #8fa0b0 323px, #dde9f2 325px, #6a7a88), linear-gradient(#cfe0f0, #a5bfb8 40%, #b8d8c0 60%, #f4f8fa 69%, #26384c 72%, #20242a 78%, #9bb6cc 96%); }
.sweep-dialog header { height: 20px; display: flex; align-items: center; justify-content: space-between; background: linear-gradient(90deg, #b7bed6, #cfd8ea 40%, #e4c8d8 62%, #d6ddf0 80%, #c2d2ec); border-radius: 0 4px 0 0; }
.dlgbtns { align-self: flex-start; display: flex; height: 13px; margin-right: 1px; border: 1px solid #8e9ab0; border-top: 0; border-radius: 0 0 4px 4px; }
.dlgbtns button { width: 21px; color: #556; font-weight: 700; display: grid; place-items: center; font-size: 10px; }
.dlgbtns button + button { width: 34px; border-left: 1px solid #8e9ab0; }
.dlgbtns svg { width: 10px; height: 8px; }
.sweep-dialog .panel { display: flex; flex-direction: column; gap: 4px; height: 600px; padding: 6px 9px 0 8px; border-top: 1px solid #76869c; background: linear-gradient(#d9d7e6, #e0d7dc 30%, #e9d9d0 45%, #f3dfc6 58%, #fbe3bf 70%, #ffe6bc 85%, #ffe5b8); }
.sweep-dialog h1 { padding: 0 0 3px 1px; text-shadow: 0 0 4px #fff; }

.icons { display: flex; }
.icons button { display: grid; place-items: center; border: 1px solid; border-color: #fbf8f6 #77727a #77727a #fbf8f6; }
.icons button[aria-pressed="true"] { border-color: #77727a #fbf8f6 #fbf8f6 #77727a; background: #ffffff44; }
.icons.small button { width: 21px; height: 21px; }
.icons.small svg { width: 16px; height: 16px; }
.icons.big button { width: 27px; height: 27px; }
.icons.big svg { width: 22px; height: 22px; }
.profile { height: 21px; margin-left: -2px; }
.setup { display: flex; gap: 6px; height: 75px; }
.preview { width: 67px; height: 67px; flex: none; margin: 1px 0 0 1px; }
.fields { flex: 1; display: flex; flex-direction: column; margin-top: -1px; }
.fields .row { height: 19px; flex: none; }
.fields .row:first-child { align-items: flex-start; line-height: 16px; gap: 1px; }
.grow { flex: 1; }
.aligned label { width: 80px; }
.aligned input { flex: 1; margin-right: 17px; }
.modes label, .laws label { display: flex; align-items: center; gap: 4px; margin-right: 2px; }
.modes { gap: 2px; }
input[type="radio"] { appearance: none; width: 9px; height: 9px; border: 1px solid #444; border-radius: 50%; background: #ffffee; padding: 0; flex: none; }
input[type="radio"]:checked { border-color: #3c5078; background: radial-gradient(circle at 35% 30%, #b8d4f4, #123c80 50%, #0a1c4c); }
input[type="checkbox"] { appearance: none; width: 9px; height: 9px; border: 1px solid #58544c; background: #ffffe6; flex: none; }
input[type="checkbox"]:checked { width: 8px; height: 8px; border-color: #c08048; background: linear-gradient(135deg, #ffe0b0, #e8954a 50%, #a85a20); }
.row label:has(input[type="checkbox"]) { display: flex; align-items: center; gap: 4px; }

.tabs { display: flex; height: 18px; margin: 0 0 -4px; }
.tabs button { height: 18px; padding: 0 6px; border-right: 1px solid #55505a; border-top: 1px solid #faf6fa; white-space: nowrap; }
.tabs button:first-child { border-left: 1px solid #faf6fa; padding: 0 8px; border-right-width: 2px; }
.tabpage { height: 115px; margin-right: -1px; padding: 4px 3px; display: flex; flex-direction: column; gap: 3px; border: 1px solid; border-color: #faf6fa #4c4650 #4c4650 #faf6fa; border-bottom-width: 2px; }
.tabpage .row { height: 17px; }
.spin { display: flex; width: 99px; height: 16px; background: #fff; border: 1px solid; border-color: #686070 #f8f4f0 #f8f4f0 #686070; }
.spin input { flex: 1; padding: 0 2px; }
.spin > span { width: 12px; display: flex; flex-direction: column; }
.spin button { flex: 1; border: 1px solid #777; background: linear-gradient(#111, #111) 4px 2px/3px 1px no-repeat, linear-gradient(#111, #111) 3px 3px/5px 1px no-repeat, #d8d8de; }
.spin button + button { border-top: 0; background: linear-gradient(#111, #111) 3px 2px/5px 1px no-repeat, linear-gradient(#111, #111) 4px 3px/3px 1px no-repeat, #d8d8de; }
.off { background: #efece6; color: #8c8890; }
.off button, .off button + button { background: linear-gradient(#666, #666) 3px 3px/5px 1px no-repeat, #e6e4e4; }
.btn { height: 15px; padding: 0 4px; background: #cfcce6; border: 1px solid; border-color: #f4f2fa #77728c #77728c #f4f2fa; border-right-width: 2px; border-bottom-width: 2px; white-space: nowrap; }
.law-btn { width: 42px; margin-left: 3px; }
.faded { color: #96909c; }
.faded .btn { width: 47px; color: #a8a4c0; text-shadow: 1px 1px 0 #fff; padding: 0; }
.faded .btn:last-child { width: 51px; margin-left: 4px; }
.row > .sector { width: 37px; margin-left: 1px; background: #e6e0e2; }

.types { height: 27px; gap: 1px; }
.spinrow { height: 17px; gap: 1px; }
.limit { height: 15px; gap: 2px; }
.limit input { flex: 1; max-width: 178px; height: 14px; }
.legend { height: 10px; line-height: 10px; display: flex; align-items: center; gap: 3px; white-space: nowrap; }
.legend::after { content: ""; flex: 1; height: 1px; background: #b4a89c; }
.smooth { height: 18px; gap: 7px; }
.check { height: 13px; }
.zone { height: 19px; gap: 6px; }
.slider { display: flex; flex-direction: column; width: 66px; }
.slider output { height: 8px; line-height: 8px; padding-left: 3px; }
.slider input { appearance: none; height: 10px; width: 66px; background: linear-gradient(#6c6658, #6c6658) 0 5px/100% 1px no-repeat; }
.slider input::-webkit-slider-thumb { appearance: none; width: 7px; height: 11px; border-radius: 1px 1px 3px 3px; background: linear-gradient(90deg, #6c9ccc, #d4e8fa 45%, #3c6c9c); }
.slider + span { margin-left: 2px; }
.connect { display: flex; flex-direction: column; align-items: flex-start; }
.strategy { width: 95px; height: 15px; }
.connect .row { height: 16px; gap: 1px; }
.add { height: 16px; width: 73px; margin-left: 1px; }
.actions { display: flex; gap: 6px; justify-content: flex-end; margin-top: 6px; margin-right: -1px; }
.actions .btn { width: 63px; height: 16px; display: flex; align-items: center; justify-content: center; position: relative; }
.actions .btn:has(.dot) { padding-left: 12px; }
.dot { position: absolute; left: 4px; top: 2px; width: 9px; height: 9px; border-radius: 50%; }
.ok { background: radial-gradient(circle at 35% 30%, #c4f4b4, #1a9a24 45%, #0a4a10); }
.no { background: radial-gradient(circle at 35% 30%, #ffc8b8, #d02a22 45%, #701010); }
.globe { position: absolute; left: -14px; bottom: -26px; width: 40px; height: 40px; border-radius: 50%; background: radial-gradient(circle at 60% 15%, #9cd4ec, #34688c 30%, #1c2838 60%); box-shadow: 0 0 10px 4px #f8a832aa; }

.law-dialog { right: 0; top: 79px; width: 252px; padding: 0 0 4px 4px; border-right: 0; border-color: #788894; border-radius: 6px 0 0 6px; background: rgba(120, 138, 158, .3); backdrop-filter: blur(3px); box-shadow: inset 1px 1px 0 #9aa8b466; }
.law-dialog header { height: 18px; display: flex; align-items: center; background: linear-gradient(90deg, transparent 166px, #dcecfa88 170px); }
.law-dialog h2 { padding: 0 10px 0 0; background: linear-gradient(90deg, #8e929a77 85%, #8e929a00); color: #08080c; text-shadow: 0 0 3px #aaa; }
.law-dialog .panel { padding: 8px 0 0 6px; height: 372px; display: flex; flex-direction: column; gap: 3px; border: 1px solid #667480; border-right: 0; background: linear-gradient(#e9ddd8, #fbe5c4 50%, #ffe6bc); }
.chart { height: 223px; width: 100%; display: block; flex: none; }
.lawval { height: 17px; gap: 2px; }
.lawval label { width: 58px; }
.law-dialog .limit { height: 17px; margin-top: 3px; }
.law-dialog .limit input { max-width: none; }
.laws { height: 13px; gap: 8px; }
.laws label { gap: 6px; margin: 0; }
.laws + .check { margin-top: 3px; }
</style>
